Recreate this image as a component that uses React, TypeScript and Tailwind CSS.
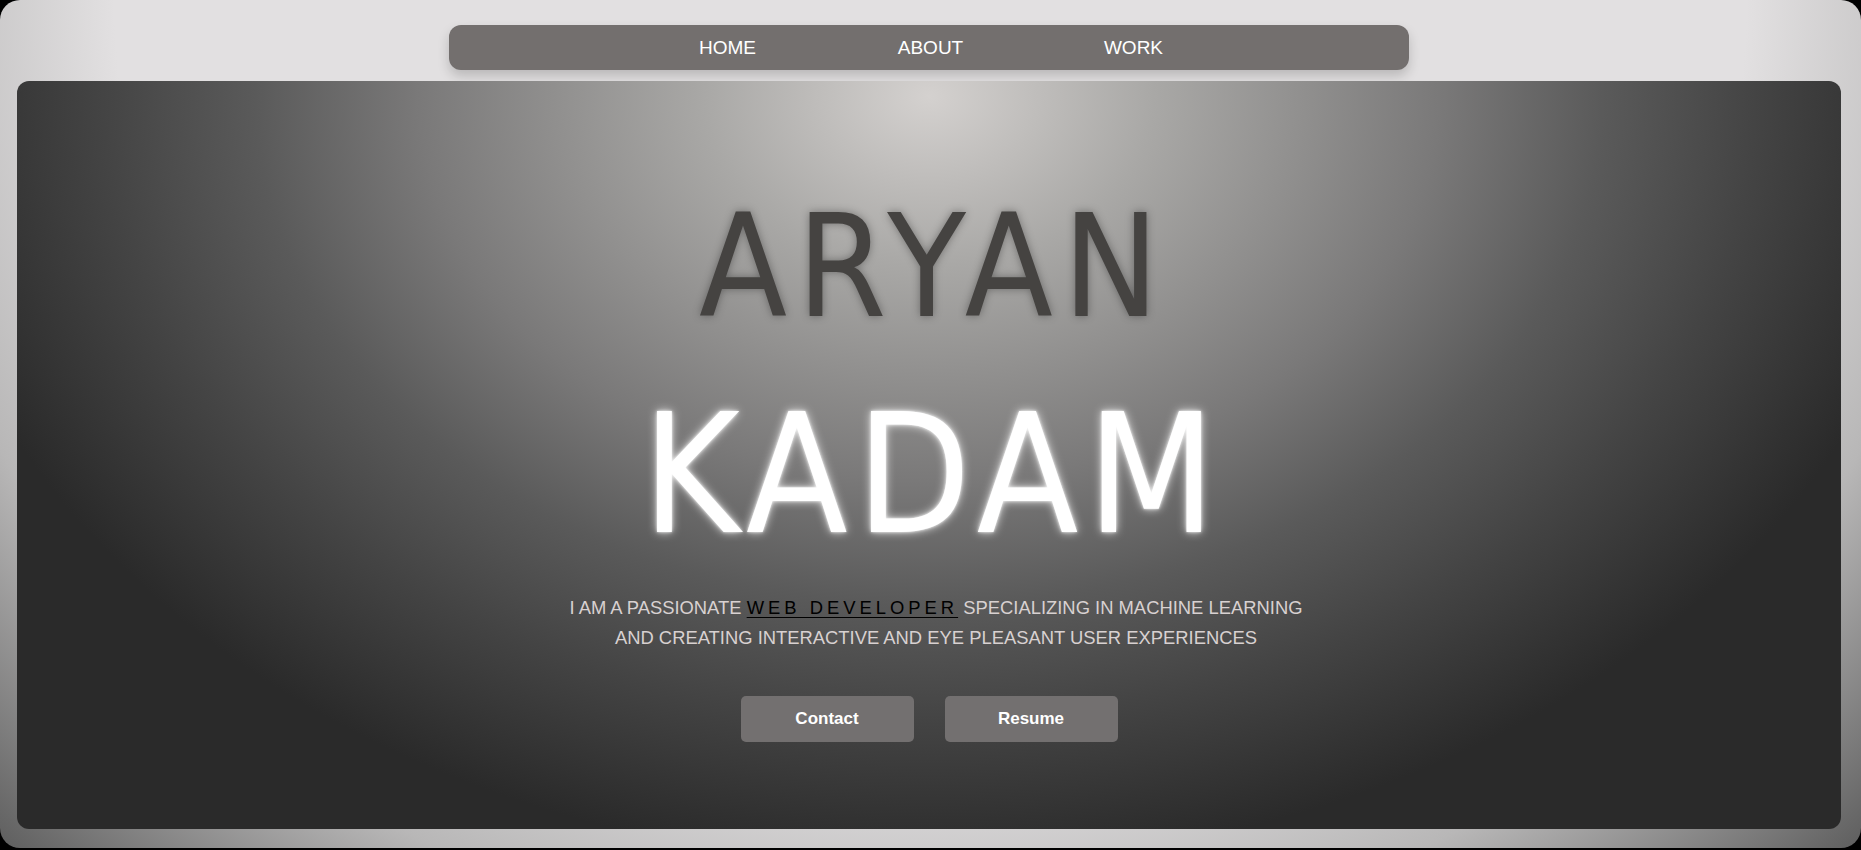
const navItems = ["HOME", "ABOUT", "WORK"];

const App = () => {
  return (
    <div className="h-[850px] bg-black font-['Liberation_Sans',Arial,sans-serif] overflow-hidden">
      <div className="h-[848px] rounded-[20px] flex flex-col pl-[17px] pr-[20px] pb-[19px] bg-[radial-gradient(ellipse_farthest-corner_at_50%_0%,#e2e0e1_62%,#b8b7b7_80%,#5e5e5e_100%)]">
        {/* Nav */}
        <nav className="mx-auto mt-[25px] w-[960px] h-[45px] shrink-0 rounded-[12px] bg-[#736f6e] shadow-[0_6px_12px_rgba(0,0,0,0.18)] flex items-center justify-center pl-[3px]">
          {navItems.map((item) => (
            <a key={item} href="#" className="w-[203px] text-center text-white text-[19px] leading-none">
              {item}
            </a>
          ))}
        </nav>

        {/* Hero card */}
        <section className="mt-[11px] flex-1 rounded-[12px] flex flex-col items-center pt-[114px] bg-[radial-gradient(ellipse_1020px_770px_at_50%_2%,#d4d1cf_0%,#a9a8a6_22%,#7a7979_50%,#5a5a5a_66%,#444444_81%,#2a2a2a_100%)]">
          <h1 className="font-['DejaVu_Sans',sans-serif] [font-stretch:condensed] text-[143px] leading-none text-[#454341] tracking-[10px] pl-[10px] [text-shadow:0_0_8px_rgba(0,0,0,0.35)]">
            ARYAN
          </h1>
          <h2 className="mt-[55px] font-['DejaVu_Sans',sans-serif] [font-stretch:condensed] text-[165px] leading-none text-white tracking-[9px] pl-[9px] [text-shadow:0_0_10px_rgba(255,255,255,0.85),0_0_3px_rgba(255,255,255,0.9)]">
            KADAM
          </h2>
          <p className="mt-[35px] pl-[14px] text-[18.4px] leading-[30px] text-center text-[#d8d1d1]">
            I AM A PASSIONATE{" "}
            <span className="text-black underline underline-offset-[3px] tracking-[4px]">WEB DEVELOPER</span>{" "}
            SPECIALIZING IN MACHINE LEARNING
            <br />
            AND CREATING INTERACTIVE AND EYE PLEASANT USER EXPERIENCES
          </p>
          <div className="mt-[43px] flex gap-[31px]">
            <button className="w-[173px] h-[46px] rounded-[5px] bg-[#737070] text-white text-[17px] font-bold">
              Contact
            </button>
            <button className="w-[173px] h-[46px] rounded-[5px] bg-[#737070] text-white text-[17px] font-bold">
              Resume
            </button>
          </div>
        </section>
      </div>
    </div>
  );
};

export default App;
